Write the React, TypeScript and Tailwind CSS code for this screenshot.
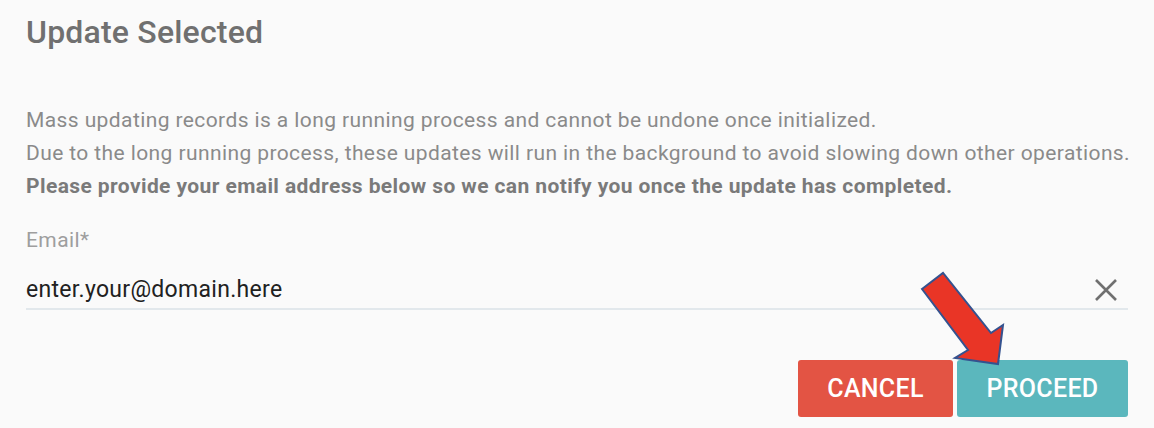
import React from 'react';

export default function App() {
  return (
    <div className="relative w-[1154px] h-[428px] bg-[#fafafa] font-['Roboto',sans-serif] overflow-hidden">
      <div className="pl-[26px] pr-[26px] pt-[12px]">
        {/* Title */}
        <h1 className="text-[32px] leading-[40px] tracking-[0.2px] font-medium text-[#707070]">Update Selected</h1>

        {/* Message */}
        <div className="mt-[52px] text-[21px] leading-[33px] tracking-[0.4px] text-[#8a8a8a] whitespace-nowrap">
          <p>Mass updating records is a long running process and cannot be undone once initialized.</p>
          <p>Due to the long running process, these updates will run in the background to avoid slowing down other operations.</p>
          <p className="font-bold text-[#7a7a7a]">
            Please provide your email address below so we can notify you once the update has completed.
          </p>
        </div>

        {/* Email field */}
        <div className="mt-[23px]">
          <label className="block text-[21px] leading-[28px] tracking-[0.4px] text-[#9e9e9e]">Email*</label>
          <div className="mt-[20px] flex items-center border-b-2 border-[#e2e8ec] pb-[2px]">
            <span className="flex-1 text-[23px] leading-[32px] tracking-[0.3px] text-[#212121]">enter.your@domain.here</span>
            <svg className="mr-[10px]" width="24" height="24" viewBox="0 0 24 24">
              <path d="M2 2 L22 22 M22 2 L2 22" stroke="#707070" strokeWidth="2.6" fill="none" />
            </svg>
          </div>
        </div>

        {/* Actions */}
        <div className="mt-[50px] flex justify-end gap-[4px]">
          <button className="w-[155px] h-[57px] rounded-[3px] bg-[#e35444] text-white text-[25px] tracking-[0.3px] font-medium uppercase">
            Cancel
          </button>
          <button className="w-[171px] h-[57px] rounded-[3px] bg-[#5bb7bd] text-white text-[25px] tracking-[0.3px] font-medium uppercase">
            Proceed
          </button>
        </div>
      </div>

      {/* Annotation arrow */}
      <svg className="absolute left-0 top-0 pointer-events-none" width="1154" height="428">
        <polygon
          points="922,289 943,273 991,333 1003,325 998,364 955,358 968,350"
          fill="#e93526"
          stroke="#34528f"
          strokeWidth="2"
          strokeLinejoin="miter"
        />
      </svg>
    </div>
  );
}
